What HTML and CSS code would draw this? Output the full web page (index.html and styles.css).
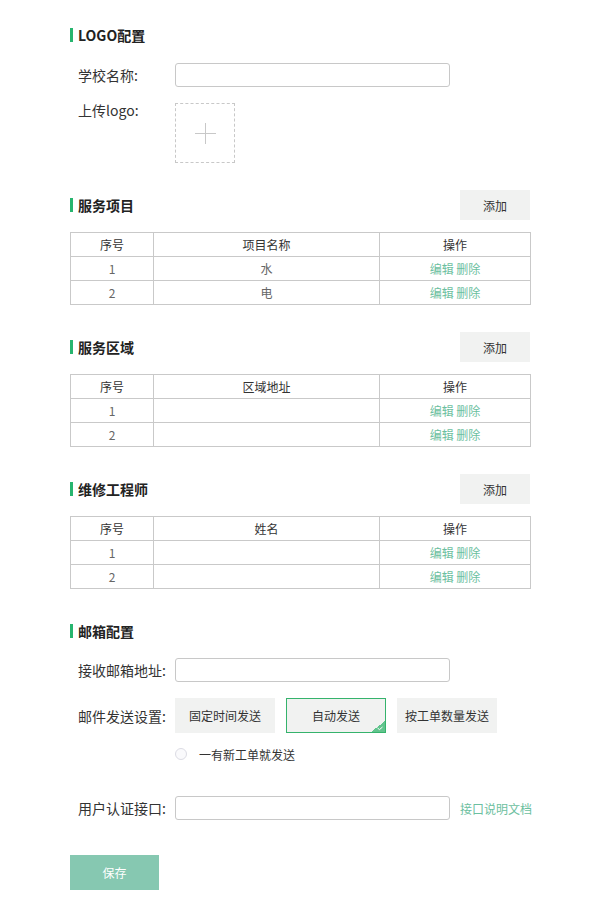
FILE: index.html
```html
<!DOCTYPE html>
<html lang="zh-CN">
<head>
<meta charset="utf-8">
<title>配置</title>
<link rel="stylesheet" href="styles.css">
</head>
<body>
<div class="page">
  <div class="sec-head first"><h2 class="sec-title">LOGO配置</h2></div>
  <div class="form-row r-school">
    <label class="label">学校名称:</label>
    <input class="input" type="text">
  </div>
  <div class="form-row r-upload">
    <label class="label top">上传logo:</label>
    <div class="upload"><span class="plus-h"></span><span class="plus-v"></span></div>
  </div>

  <div class="sec-head"><h2 class="sec-title">服务项目</h2><button class="btn-add">添加</button></div>
  <table class="tbl">
    <colgroup><col class="c1"><col class="c2"><col class="c3"></colgroup>
    <tr><th>序号</th><th>项目名称</th><th>操作</th></tr>
    <tr><td>1</td><td>水</td><td><a class="op">编辑</a> <a class="op">删除</a></td></tr>
    <tr><td>2</td><td>电</td><td><a class="op">编辑</a> <a class="op">删除</a></td></tr>
  </table>

  <div class="sec-head"><h2 class="sec-title">服务区域</h2><button class="btn-add">添加</button></div>
  <table class="tbl">
    <colgroup><col class="c1"><col class="c2"><col class="c3"></colgroup>
    <tr><th>序号</th><th>区域地址</th><th>操作</th></tr>
    <tr><td>1</td><td></td><td><a class="op">编辑</a> <a class="op">删除</a></td></tr>
    <tr><td>2</td><td></td><td><a class="op">编辑</a> <a class="op">删除</a></td></tr>
  </table>

  <div class="sec-head"><h2 class="sec-title">维修工程师</h2><button class="btn-add">添加</button></div>
  <table class="tbl">
    <colgroup><col class="c1"><col class="c2"><col class="c3"></colgroup>
    <tr><th>序号</th><th>姓名</th><th>操作</th></tr>
    <tr><td>1</td><td></td><td><a class="op">编辑</a> <a class="op">删除</a></td></tr>
    <tr><td>2</td><td></td><td><a class="op">编辑</a> <a class="op">删除</a></td></tr>
  </table>

  <div class="sec-head"><h2 class="sec-title">邮箱配置</h2></div>
  <div class="form-row r-mail">
    <label class="label">接收邮箱地址:</label>
    <input class="input" type="text">
  </div>
  <div class="form-row r-send">
    <label class="label">邮件发送设置:</label>
    <div class="opts">
      <button class="opt">固定时间发送</button>
      <button class="opt active">自动发送<span class="corner"><svg width="14" height="11" viewBox="0 0 14 11"><polyline points="6.5,7 8.5,8.6 11.5,6" fill="none" stroke="#fff" stroke-width="1"/></svg></span></button>
      <button class="opt">按工单数量发送</button>
    </div>
  </div>
  <div class="radio-row">
    <span class="radio"></span><span class="radio-text">一有新工单就发送</span>
  </div>
  <div class="form-row r-auth">
    <label class="label">用户认证接口:</label>
    <input class="input" type="text">
    <a class="doc-link">接口说明文档</a>
  </div>
  <button class="btn-save">保存</button>
</div>
</body>
</html>
```
FILE: styles.css
```css
html, body {
  margin: 0;
  padding: 0;
  background: #fff;
}
body {
  font-family: "Noto Sans CJK SC", "Noto Sans", sans-serif;
  color: #333;
  font-size: 14px;
}
.page {
  width: 460px;
  padding: 20px 0 0 70px;
}
.sec-head {
  display: flex;
  align-items: center;
  justify-content: space-between;
  height: 30px;
  margin-top: 27px;
}
.sec-head.first {
  margin-top: 0;
}
.sec-title {
  margin: 0;
  font-size: 14px;
  font-weight: bold;
  line-height: 20px;
  color: #222;
  border-left: 3px solid #27b56f;
  padding-left: 5px;
  height: 14px;
  display: flex;
  align-items: center;
}
.btn-add {
  width: 70px;
  height: 30px;
  border: none;
  background: #f1f2f1;
  font-family: inherit;
  font-size: 12px;
  color: #333;
  padding: 0;
}
.form-row {
  display: flex;
  align-items: center;
}
.label {
  flex: 0 0 105px;
  width: 105px;
  padding-left: 8px;
  box-sizing: border-box;
  font-size: 14px;
  color: #333;
  white-space: nowrap;
}
.label.top {
  align-self: flex-start;
  line-height: 14px;
}
.input {
  flex: 0 0 275px;
  width: 275px;
  height: 24px;
  box-sizing: border-box;
  border: 1px solid #c8c8c8;
  border-radius: 3px;
  margin: 0;
  padding: 0 6px;
  background: #fff;
}
.r-school { margin-top: 13px; }
.r-upload { margin-top: 16px; align-items: flex-start; }
.upload {
  width: 60px;
  height: 60px;
  box-sizing: border-box;
  border: 1px dashed #c8c8c8;
  position: relative;
}
.plus-h, .plus-v {
  position: absolute;
  background: #c8c8c8;
}
.plus-h { left: 19px; top: 29px; width: 21px; height: 1px; }
.plus-v { left: 29px; top: 19px; width: 1px; height: 21px; }

.tbl {
  width: 460px;
  border-collapse: collapse;
  margin-top: 12px;
  table-layout: fixed;
  font-size: 12px;
}
.c1 { width: 83px; }
.c2 { width: 226px; }
.c3 { width: 151px; }
.tbl th, .tbl td {
  border: 1px solid #c9c9c9;
  height: 23px;
  padding: 0;
  text-align: center;
  vertical-align: middle;
  line-height: 16px;
}
.tbl th {
  font-weight: normal;
  color: #333;
}
.tbl td {
  color: #666;
}
.op {
  color: #6cc0a0;
  text-decoration: none;
}
.r-mail { margin-top: 12px; }
.r-send { margin-top: 16px; }
.opts {
  display: flex;
  gap: 11px;
}
.opt {
  width: 100px;
  height: 35px;
  box-sizing: border-box;
  border: 1px solid transparent;
  background: #f1f2f1;
  font-family: inherit;
  font-size: 12px;
  color: #333;
  padding: 0;
  position: relative;
}
.opt.active {
  border-color: #35b36c;
}
.corner {
  position: absolute;
  right: 0;
  bottom: 0;
  width: 14px;
  height: 11px;
  background: linear-gradient(to bottom right, transparent 50%, #62c48d 50%);
  display: flex;
}
.radio-row {
  display: flex;
  align-items: center;
  margin-top: 13px;
  padding-left: 105px;
  height: 16px;
}
.radio {
  width: 12px;
  height: 12px;
  box-sizing: border-box;
  border: 1px solid #dcdce4;
  border-radius: 50%;
  background: #fafafc;
}
.radio-text {
  margin-left: 12px;
  font-size: 12px;
  color: #333;
}
.r-auth { margin-top: 34px; }
.doc-link {
  margin-left: 10px;
  color: #6cc0a0;
  font-size: 12px;
  white-space: nowrap;
}
.btn-save {
  display: block;
  margin-top: 35px;
  width: 89px;
  height: 35px;
  border: none;
  background: #86c8b1;
  color: #fff;
  font-family: inherit;
  font-size: 12px;
  padding: 0;
}
```
